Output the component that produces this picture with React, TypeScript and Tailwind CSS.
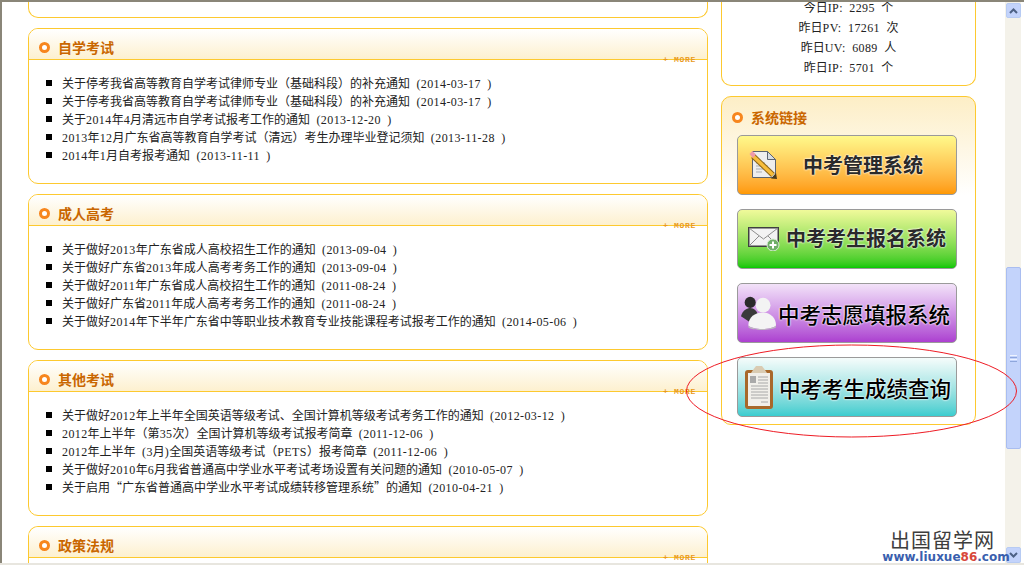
import React from 'react';

type Section = {
  title: string;
  items: string[];
};

const sections: Section[] = [
  {
    title: '自学考试',
    items: [
      '关于停考我省高等教育自学考试律师专业（基础科段）的补充通知 (2014-03-17 )',
      '关于停考我省高等教育自学考试律师专业（基础科段）的补充通知 (2014-03-17 )',
      '关于2014年4月清远市自学考试报考工作的通知 (2013-12-20 )',
      '2013年12月广东省高等教育自学考试（清远）考生办理毕业登记须知 (2013-11-28 )',
      '2014年1月自考报考通知 (2013-11-11 )',
    ],
  },
  {
    title: '成人高考',
    items: [
      '关于做好2013年广东省成人高校招生工作的通知 (2013-09-04 )',
      '关于做好广东省2013年成人高考考务工作的通知 (2013-09-04 )',
      '关于做好2011年广东省成人高校招生工作的通知 (2011-08-24 )',
      '关于做好广东省2011年成人高考考务工作的通知 (2011-08-24 )',
      '关于做好2014年下半年广东省中等职业技术教育专业技能课程考试报考工作的通知 (2014-05-06 )',
    ],
  },
  {
    title: '其他考试',
    items: [
      '关于做好2012年上半年全国英语等级考试、全国计算机等级考试考务工作的通知 (2012-03-12 )',
      '2012年上半年（第35次）全国计算机等级考试报考简章 (2011-12-06 )',
      '2012年上半年 (3月)全国英语等级考试（PETS）报考简章 (2011-12-06 )',
      '关于做好2010年6月我省普通高中学业水平考试考场设置有关问题的通知 (2010-05-07 )',
      '关于启用“广东省普通高中学业水平考试成绩转移管理系统”的通知 (2010-04-21 )',
    ],
  },
];

const stats = ['今日IP: 2295 个', '昨日PV: 17261 次', '昨日UV: 6089 人', '昨日IP: 5701 个'];

function Mixed({ text }: { text: string }) {
  const parts = text.split(/([\x20-\x7e]+)/).filter(Boolean);
  return (
    <>
      {parts.map((part, i) =>
        /^[\x20-\x7e]+$/.test(part) ? (
          <span key={i} className="tracking-[0.4px] whitespace-pre [word-spacing:3px]">
            {part}
          </span>
        ) : (
          <span key={i} className="font-['Noto_Sans_CJK_SC',sans-serif]">
            {part}
          </span>
        ),
      )}
    </>
  );
}

function Dot() {
  return (
    <span className="block h-[11px] w-[11px] shrink-0 rounded-full border-[3px] border-[#f7861e] bg-white" />
  );
}

function SectionHeader({ title }: { title: string }) {
  return (
    <div className="relative flex h-[31px] items-center gap-[8px] border-b border-[#fdc92f] bg-gradient-to-b from-white to-[#fdf0cf] pt-[6px] pl-[10px]">
      <Dot />
      <span className="font-['Noto_Sans_CJK_SC',sans-serif] text-[14px] font-bold text-[#c96600]">{title}</span>
      <span className="absolute right-[11px] bottom-[-5px] font-['Liberation_Mono',monospace] text-[8px] leading-[8px] font-bold tracking-[0.7px] text-[#e99a1c]">
        + MORE
      </span>
    </div>
  );
}

function NewsCard({ section }: { section: Section }) {
  return (
    <div className="h-[156px] shrink-0 overflow-hidden rounded-[10px] border border-[#fdc92f] bg-white">
      <SectionHeader title={section.title} />
      <ul className="pt-[14px] pl-[17px]">
        {section.items.map((item, i) => (
          <li key={i} className="flex h-[18px] items-center text-[12px] leading-[18px] text-[#222]">
            <span className="mr-[10px] h-[6px] w-[6px] shrink-0 bg-black" />
            <span className="whitespace-nowrap">
              <Mixed text={item} />
            </span>
          </li>
        ))}
      </ul>
    </div>
  );
}

function PencilIcon() {
  return (
    <svg width="30" height="30" viewBox="0 0 30 30" className="shrink-0">
      <path d="M3.5 1.5H18.5L26.5 9.5V27.5H3.5Z" fill="#eeeeee" stroke="#5b6470" strokeWidth="1" />
      <path d="M18.5 1.5V9.5H26.5Z" fill="#d8dde2" stroke="#5b6470" strokeWidth="1" />
      <path d="M7 13H16M7 16H19M7 19H16M7 22H13" stroke="#a9adb2" strokeWidth="1" />
      <path d="M4 6L24 25" stroke="#8a6418" strokeWidth="5.5" />
      <path d="M4 6L24 25" stroke="#f7bd3c" strokeWidth="3.5" />
      <path d="M0.5 4L3.5 1L7 4.5L4 8Z" fill="#ef9aa8" />
      <path d="M22 28.5L28 29L27 23Z" fill="#4a3a1a" />
    </svg>
  );
}

function EnvelopeIcon() {
  return (
    <svg width="32" height="24" viewBox="0 0 32 24" className="shrink-0">
      <rect x="0.75" y="0.75" width="29.5" height="18.5" fill="#f3f3f3" stroke="#3f3f3f" strokeWidth="1.5" />
      <path d="M1 1L15.5 12L30 1M1 19L11 9M30 19L20 9" fill="none" stroke="#8d8d8d" strokeWidth="1" />
      <circle cx="25" cy="18" r="6" fill="#6fae68" stroke="#d8ecd4" strokeWidth="1" />
      <path d="M25 14.5V21.5M21.5 18H28.5" stroke="#ffffff" strokeWidth="2" />
    </svg>
  );
}

function PeopleIcon() {
  return (
    <svg width="37" height="36" viewBox="0 0 40 39" className="shrink-0">
      <circle cx="11" cy="8" r="6" fill="#2b2b2b" />
      <path d="M1 23C3 16 8 14 11 14C15 14 19 17 20 24L10 29Z" fill="#3a3a3a" />
      <circle cx="25" cy="11" r="8" fill="#f3f3f3" />
      <path d="M9 33C9 24 16 19 25 19C33 19 39 25 39 33C35 38 13 38 9 33Z" fill="#f4f4f4" />
      <path d="M9 33C13 38 35 38 39 33L39 35C34 39 13 39 9 35Z" fill="#bdb8c0" />
    </svg>
  );
}

function ClipboardIcon() {
  return (
    <svg width="31" height="45" viewBox="0 0 31 45" className="shrink-0">
      <rect x="1" y="5" width="28" height="39" rx="3" fill="#a8682a" />
      <rect x="4" y="8" width="22" height="33" fill="#f1efea" />
      <path d="M9 5L12 1H18L21 5L23 8H7Z" fill="#d9cbb2" />
      <rect x="6" y="11" width="6" height="7" fill="#a9a9a9" />
      <path d="M14 12H24M14 15H24M14 18H24M7 21H24M7 24H24M7 27H24M7 30H24M7 33H24M17 37H24" stroke="#a8a8a8" strokeWidth="1" />
    </svg>
  );
}

const buttons = [
  {
    label: '中考管理系统',
    icon: <PencilIcon />,
    bg: 'bg-gradient-to-b from-[#fff98a] to-[#ff9900]',
    box: 'pl-[11px] gap-[24px]',
    text: 'text-[20px] font-bold text-[#2a2a2a]',
  },
  {
    label: '中考考生报名系统',
    icon: <EnvelopeIcon />,
    bg: 'bg-gradient-to-b from-[#f0fa9a] to-[#00c800]',
    box: 'pl-[10px] gap-[6px]',
    text: 'text-[20px] font-bold pb-[3px] text-[#2a2a2a]',
  },
  {
    label: '中考志愿填报系统',
    icon: <PeopleIcon />,
    bg: 'bg-gradient-to-b from-[#f2e2f8] to-[#ac3fd0]',
    box: 'pl-[2px] gap-[1px]',
    text: 'text-[21.5px] font-medium pt-[3px] text-black',
  },
  {
    label: '中考考生成绩查询',
    icon: <ClipboardIcon />,
    bg: 'bg-gradient-to-b from-[#f5fcfb] to-[#39cdcf]',
    box: 'pl-[6px] gap-[4px]',
    text: 'text-[21.5px] font-medium pt-[3px] text-black',
  },
];

function SystemButton({ button }: { button: (typeof buttons)[number] }) {
  return (
    <div
      className={`flex h-[60px] w-[220px] items-center overflow-hidden rounded-[5px] border border-[#9a9a9a] ${button.bg} ${button.box}`}
    >
      {button.icon}
      <span
        className={`whitespace-nowrap font-['Noto_Sans_CJK_SC',sans-serif] [text-shadow:0_0_2px_#fff,0_0_2px_#fff] ${button.text}`}
      >
        {button.label}
      </span>
    </div>
  );
}

function Sidebar() {
  return (
    <aside className="flex w-[255px] shrink-0 flex-col gap-[10px]">
      <div className="-mt-[3px] flex h-[87px] shrink-0 flex-col items-center overflow-hidden rounded-b-[10px] border border-t-0 border-[#fdc92f] bg-white text-[12px] leading-[20px] text-[#222]">
        {stats.map((line) => (
          <div key={line} className="h-[20px] shrink-0 whitespace-nowrap first:-mt-[2px]">
            <Mixed text={line} />
          </div>
        ))}
      </div>
      <div className="h-[329px] shrink-0 rounded-[10px] border border-[#fdc92f] bg-gradient-to-b from-[#fdeec6] via-white via-[30%] to-white px-[15px]">
        <div className="-ml-[5px] flex h-[38px] items-center gap-[8px] pt-[3px]">
          <Dot />
          <span className="font-['Noto_Sans_CJK_SC',sans-serif] text-[14px] font-bold text-[#c96600]">系统链接</span>
        </div>
        <div className="flex flex-col gap-[14px]">
          {buttons.map((button) => (
            <SystemButton key={button.label} button={button} />
          ))}
        </div>
      </div>
    </aside>
  );
}

function Scrollbar() {
  return (
    <div className="w-[19px] shrink-0 bg-white pr-[3px]">
      <div className="flex h-full flex-col bg-[#f4f2ea] pt-[1px] pl-[1px]">
        <div className="flex h-[15px] shrink-0 items-center justify-center rounded-[2px] border border-[#b7cbf3] bg-[#c3d3fb]">
          <svg width="9" height="6" viewBox="0 0 9 6">
            <path d="M1 5L4.5 1.5L8 5" fill="none" stroke="#4d6185" strokeWidth="2" />
          </svg>
        </div>
        <div className="mt-[249px] flex h-[182px] shrink-0 items-center justify-center rounded-[2px] border border-[#a9bdf0] bg-[#c3d3fb]">
          <div className="flex w-[7px] flex-col gap-[1px]">
            <span className="h-px bg-[#eef3ff]" />
            <span className="h-px bg-[#8ea6dc]" />
            <span className="h-px bg-[#eef3ff]" />
            <span className="h-px bg-[#8ea6dc]" />
          </div>
        </div>
        <div className="mt-auto flex h-[16px] shrink-0 items-center justify-center rounded-[2px] border border-[#b7cbf3] bg-[#c3d3fb]">
          <svg width="9" height="6" viewBox="0 0 9 6">
            <path d="M1 1L4.5 4.5L8 1" fill="none" stroke="#4d6185" strokeWidth="2" />
          </svg>
        </div>
      </div>
    </div>
  );
}

export default function App() {
  return (
    <div className="relative flex h-[565px] w-[1024px] flex-col overflow-hidden bg-white font-['Liberation_Serif','Noto_Sans_CJK_SC',serif]">
      <div className="h-[2px] w-full shrink-0 bg-[#8a8678]" />
      <div className="flex min-h-0 flex-1">
        <div className="w-[2px] shrink-0 bg-[#8a8678]" />
        <div className="flex min-w-0 flex-1 gap-[13px] overflow-hidden pl-[26px]">
          <main className="flex w-[680px] shrink-0 flex-col gap-[10px]">
            <div className="-mt-[10px] h-[26px] shrink-0 rounded-b-[10px] border border-t-0 border-[#fdc92f] bg-white" />
            {sections.map((section) => (
              <NewsCard key={section.title} section={section} />
            ))}
            <div className="flex-1 overflow-hidden rounded-t-[10px] border border-b-0 border-[#fdc92f] bg-white">
              <SectionHeader title="政策法规" />
            </div>
          </main>
          <Sidebar />
        </div>
        <Scrollbar />
      </div>
      <div className="h-[2px] w-full shrink-0 bg-[#e8e6df]" />

      {/* hand-drawn marking over the page */}
      <svg className="pointer-events-none absolute top-[344px] left-[685px]" width="333" height="94" viewBox="0 0 333 94">
        <ellipse cx="166.5" cy="47" rx="165" ry="46" fill="none" stroke="#ee1c25" strokeWidth="1" />
      </svg>

      {/* watermark */}
      <div className="absolute top-[529px] left-[881px] flex w-[130px] flex-col items-center">
        <span className="pr-[7px] font-['Noto_Sans_CJK_SC',sans-serif] text-[20px] leading-[22px] tracking-[1px] text-[#3d3d3d]">
          出国留学网
        </span>
        <span className="font-['DejaVu_Sans',sans-serif] text-[12px] leading-[12px] font-bold whitespace-nowrap text-[#3a5fae]">
          www.liuxue<span className="text-[#d8473a]">86</span>.com
        </span>
      </div>
    </div>
  );
}
